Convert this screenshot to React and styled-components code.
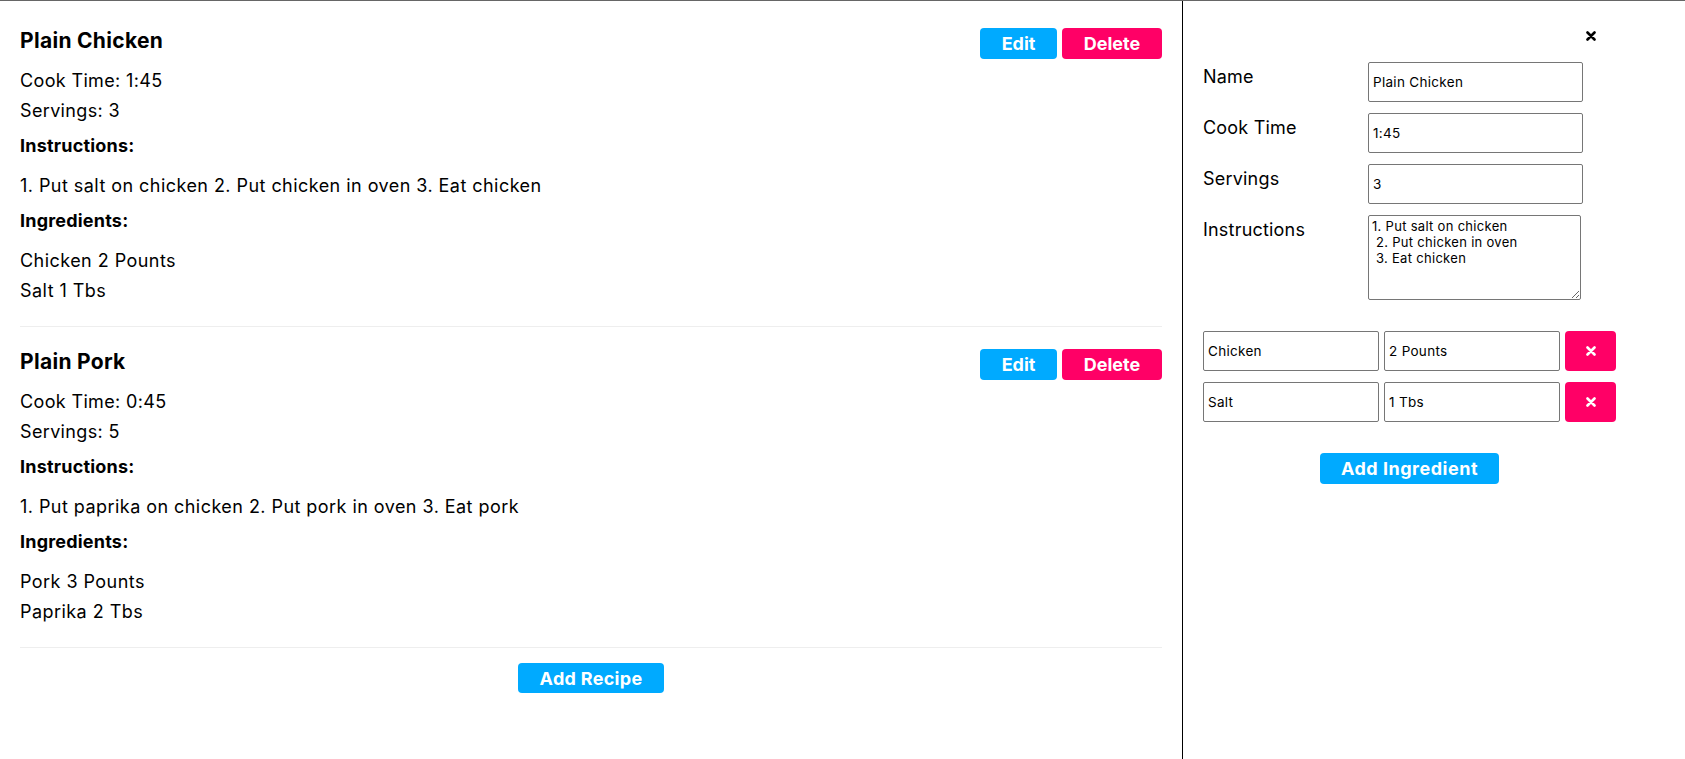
import styled, { createGlobalStyle } from "styled-components";

const FONT = `Inter, Lato, "Noto Sans", sans-serif`;

const GlobalStyle = createGlobalStyle`
  html, body {
    margin: 0;
    padding: 0;
    background: #fff;
  }
  body {
    font-family: ${FONT};
    color: #000;
  }
  * {
    box-sizing: border-box;
  }
`;

const Page = styled.div`
  display: flex;
  height: 759px;
  border-top: 1px solid #666;
`;

const RecipeList = styled.div`
  width: 1183px;
  flex-shrink: 0;
  padding: 5px 20px 0 20px;
  border-right: 1px solid #000;
  display: flex;
  flex-direction: column;
`;

const Card = styled.div`
  padding: 22px 0 20px 0;
  border-bottom: 1px solid #eee;
`;

const CardHeader = styled.div`
  display: flex;
  align-items: flex-start;
  justify-content: space-between;
  margin-bottom: 7px;
`;

const Title = styled.h2`
  margin: 0;
  font-size: 21px;
  font-weight: 700;
  line-height: 25px;
  letter-spacing: 0.3px;
`;

const Actions = styled.div`
  display: flex;
  gap: 5px;
`;

const Button = styled.button`
  border: none;
  border-radius: 4px;
  background: ${(p) => (p.$danger ? "#ff0066" : "#00aaff")};
  color: #fff;
  font-family: ${FONT};
  font-size: 18px;
  font-weight: 700;
  letter-spacing: ${(p) => p.$ls || 0}px;
  width: ${(p) => p.$w}px;
  height: ${(p) => p.$h || 31}px;
  padding: 0;
  display: flex;
  align-items: center;
  justify-content: center;
  cursor: pointer;
`;

const Line = styled.div`
  font-size: 18px;
  line-height: 30px;
  letter-spacing: 0.35px;
`;

const Label = styled.div`
  font-size: 18px;
  font-weight: 700;
  line-height: 30px;
  letter-spacing: 0.2px;
  margin-top: 5px;
`;

const Body = styled.div`
  font-size: 18px;
  line-height: 30px;
  letter-spacing: 0.45px;
  margin-top: 10px;
`;

const Footer = styled.div`
  display: flex;
  justify-content: center;
  margin-top: 15px;
`;

const Editor = styled.div`
  flex: 1;
  padding: 23px 20px 0 20px;
`;

const Form = styled.div`
  width: 413px;
  display: flex;
  flex-direction: column;
`;

const CloseRow = styled.div`
  display: flex;
  justify-content: flex-end;
  margin-bottom: 14px;
`;

const CloseButton = styled.button`
  width: 51px;
  height: 24px;
  border: none;
  background: transparent;
  padding: 0;
  display: flex;
  align-items: center;
  justify-content: center;
  cursor: pointer;
`;

const Field = styled.div`
  display: flex;
  align-items: flex-start;
  margin-bottom: 11px;
`;

const FieldLabel = styled.label`
  width: 165px;
  flex-shrink: 0;
  padding-top: 4px;
  font-size: 18px;
  letter-spacing: 0.2px;
`;

const Input = styled.input`
  width: ${(p) => p.$w || 215}px;
  height: 40px;
  border: 1px solid #767676;
  border-radius: 2px;
  padding: 0 4px;
  font-family: ${FONT};
  font-size: 13.5px;
  letter-spacing: 0.3px;
  color: #000;
`;

const TextArea = styled.textarea`
  width: 213px;
  height: 85px;
  border: 1px solid #767676;
  border-radius: 2px;
  padding: 2px 3px;
  font-family: ${FONT};
  font-size: 13px;
  line-height: 16px;
  letter-spacing: 0.3px;
  color: #000;
`;

const IngredientList = styled.div`
  display: flex;
  flex-direction: column;
  gap: 11px;
  margin-top: 20px;
`;

const IngredientRow = styled.div`
  display: flex;
  gap: 5px;
`;

const AddRow = styled.div`
  display: flex;
  justify-content: center;
  margin-top: 31px;
`;

function Cross({ color }) {
  return (
    <svg width="10" height="10" viewBox="0 0 10 10">
      <path
        d="M1.5 1.5 L8.5 8.5 M8.5 1.5 L1.5 8.5"
        stroke={color}
        strokeWidth="2.6"
        strokeLinecap="round"
      />
    </svg>
  );
}

const recipes = [
  {
    name: "Plain Chicken",
    time: "1:45",
    servings: 3,
    instructions: "1. Put salt on chicken 2. Put chicken in oven 3. Eat chicken",
    ingredients: ["Chicken 2 Pounts", "Salt 1 Tbs"],
  },
  {
    name: "Plain Pork",
    time: "0:45",
    servings: 5,
    instructions: "1. Put paprika on chicken 2. Put pork in oven 3. Eat pork",
    ingredients: ["Pork 3 Pounts", "Paprika 2 Tbs"],
  },
];

export default function App() {
  return (
    <>
      <GlobalStyle />
      <Page>
        <RecipeList>
          {recipes.map((r) => (
            <Card key={r.name}>
              <CardHeader>
                <Title>{r.name}</Title>
                <Actions>
                  <Button $w={77}>Edit</Button>
                  <Button $w={100} $danger>
                    Delete
                  </Button>
                </Actions>
              </CardHeader>
              <Line>Cook Time: {r.time}</Line>
              <Line>Servings: {r.servings}</Line>
              <Label>Instructions:</Label>
              <Body>{r.instructions}</Body>
              <Label>Ingredients:</Label>
              <Body>
                {r.ingredients.map((i) => (
                  <div key={i}>{i}</div>
                ))}
              </Body>
            </Card>
          ))}
          <Footer>
            <Button $w={146} $h={30} $ls={0.3}>
              Add Recipe
            </Button>
          </Footer>
        </RecipeList>

        <Editor>
          <Form>
            <CloseRow>
              <CloseButton>
                <Cross color="#000" />
              </CloseButton>
            </CloseRow>
            <Field>
              <FieldLabel>Name</FieldLabel>
              <Input defaultValue="Plain Chicken" />
            </Field>
            <Field>
              <FieldLabel>Cook Time</FieldLabel>
              <Input defaultValue="1:45" />
            </Field>
            <Field>
              <FieldLabel>Servings</FieldLabel>
              <Input defaultValue="3" />
            </Field>
            <Field>
              <FieldLabel>Instructions</FieldLabel>
              <TextArea
                defaultValue={
                  "1. Put salt on chicken\n 2. Put chicken in oven\n 3. Eat chicken"
                }
              />
            </Field>
            <IngredientList>
              <IngredientRow>
                <Input $w={176} defaultValue="Chicken" />
                <Input $w={176} defaultValue="2 Pounts" />
                <Button $w={51} $h={40} $danger>
                  <Cross color="#fff" />
                </Button>
              </IngredientRow>
              <IngredientRow>
                <Input $w={176} defaultValue="Salt" />
                <Input $w={176} defaultValue="1 Tbs" />
                <Button $w={51} $h={40} $danger>
                  <Cross color="#fff" />
                </Button>
              </IngredientRow>
            </IngredientList>
            <AddRow>
              <Button $w={179} $ls={0.5}>
                Add Ingredient
              </Button>
            </AddRow>
          </Form>
        </Editor>
      </Page>
    </>
  );
}
